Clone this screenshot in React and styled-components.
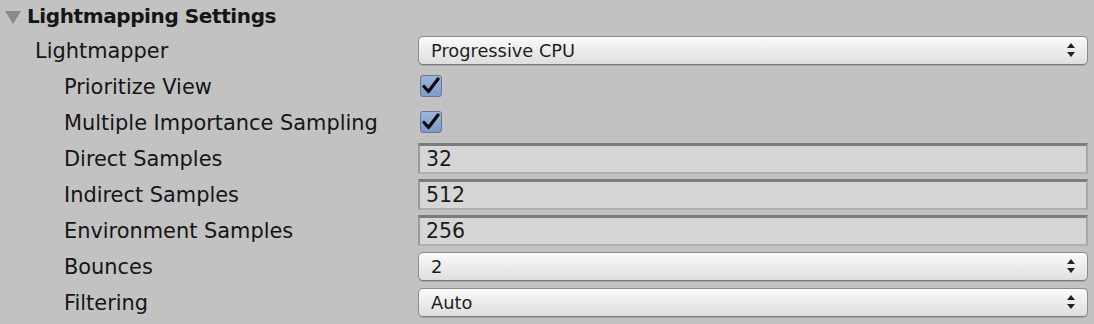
import React from "react";
import styled, { createGlobalStyle } from "styled-components";

const Global = createGlobalStyle`
  html, body {
    margin: 0;
    padding: 0;
    background: #c2c2c2;
  }
  body {
    font-family: "DejaVu Sans", "Liberation Sans", sans-serif;
    color: #151515;
  }
`;

const Panel = styled.div`
  width: 1094px;
  height: 324px;
  overflow: hidden;
  background: #c2c2c2;
`;

const Header = styled.div`
  height: 32px;
  display: flex;
  align-items: center;
  padding-left: 5px;
  gap: 6px;
  font-size: 20px;
  font-weight: bold;
  letter-spacing: -0.4px;
`;

const Triangle = styled.span`
  width: 0;
  height: 0;
  border-left: 8px solid transparent;
  border-right: 8px solid transparent;
  border-top: 13px solid #8a8a8a;
  margin-top: 2px;
`;

const Row = styled.div`
  height: 36px;
  display: flex;
  align-items: center;
`;

const Label = styled.div`
  width: 418px;
  box-sizing: border-box;
  padding-left: ${(p) => (p.$indent ? 64 : 35)}px;
  font-size: 20.9px;
  padding-top: 2px;
`;

const Control = styled.div`
  width: 670px;
  display: flex;
  align-items: center;
`;

const Select = styled.div`
  width: 100%;
  height: 29px;
  box-sizing: border-box;
  border: 1px solid #8c8c8c;
  border-bottom-color: #7a7a7a;
  border-radius: 5px;
  background: linear-gradient(#fbfbfb, #ececec 50%, #dedede);
  box-shadow: 0 1px 0 rgba(0, 0, 0, 0.15);
  display: flex;
  align-items: center;
  justify-content: space-between;
  padding: 0 12px 0 12px;
  font-size: 17.8px;
  color: #1e1e1e;
`;

const Arrows = styled.svg`
  width: 8px;
  height: 14px;
`;

const Field = styled.div`
  width: 100%;
  height: 31px;
  box-sizing: border-box;
  background: #d6d6d6;
  border: 2px solid #9a9a9a;
  border-top: 3px solid #7c7c7c;
  border-right-color: #a8a8a8;
  border-bottom-color: #b0b0b0;
  display: flex;
  align-items: center;
  padding-left: 6px;
  font-size: 20.5px;
  color: #1a1a1a;
`;

const Check = styled.div`
  width: 22px;
  height: 22px;
  margin-left: 2px;
  box-sizing: border-box;
  border: 1px solid #6b7890;
  border-radius: 3px;
  background: linear-gradient(#9db5dc, #7e9acc);
  display: flex;
  align-items: center;
  justify-content: center;
`;

const Tick = () => (
  <svg width="20" height="18" viewBox="0 0 20 18">
    <path d="M3 9.5 L7.5 14.5 L17 2" fill="none" stroke="#0a0a0a" strokeWidth="3.2" strokeLinecap="round" strokeLinejoin="round" />
  </svg>
);

const Dropdown = ({ value }) => (
  <Select>
    <span>{value}</span>
    <Arrows viewBox="0 0 8 14">
      <path d="M4 0 L8 5 L0 5 Z" fill="#222" />
      <path d="M4 14 L8 9 L0 9 Z" fill="#222" />
    </Arrows>
  </Select>
);

const rows = [
  { label: "Prioritize View", type: "check" },
  { label: "Multiple Importance Sampling", type: "check" },
  { label: "Direct Samples", type: "field", value: "32" },
  { label: "Indirect Samples", type: "field", value: "512" },
  { label: "Environment Samples", type: "field", value: "256" },
  { label: "Bounces", type: "select", value: "2" },
  { label: "Filtering", type: "select", value: "Auto" },
];

export default function App() {
  return (
    <Panel>
      <Global />
      <Header>
        <Triangle />
        <span>Lightmapping Settings</span>
      </Header>
      <Row>
        <Label>Lightmapper</Label>
        <Control>
          <Dropdown value="Progressive CPU" />
        </Control>
      </Row>
      {rows.map((r) => (
        <Row key={r.label}>
          <Label $indent>{r.label}</Label>
          <Control>
            {r.type === "check" && (
              <Check>
                <Tick />
              </Check>
            )}
            {r.type === "field" && <Field>{r.value}</Field>}
            {r.type === "select" && <Dropdown value={r.value} />}
          </Control>
        </Row>
      ))}
    </Panel>
  );
}
